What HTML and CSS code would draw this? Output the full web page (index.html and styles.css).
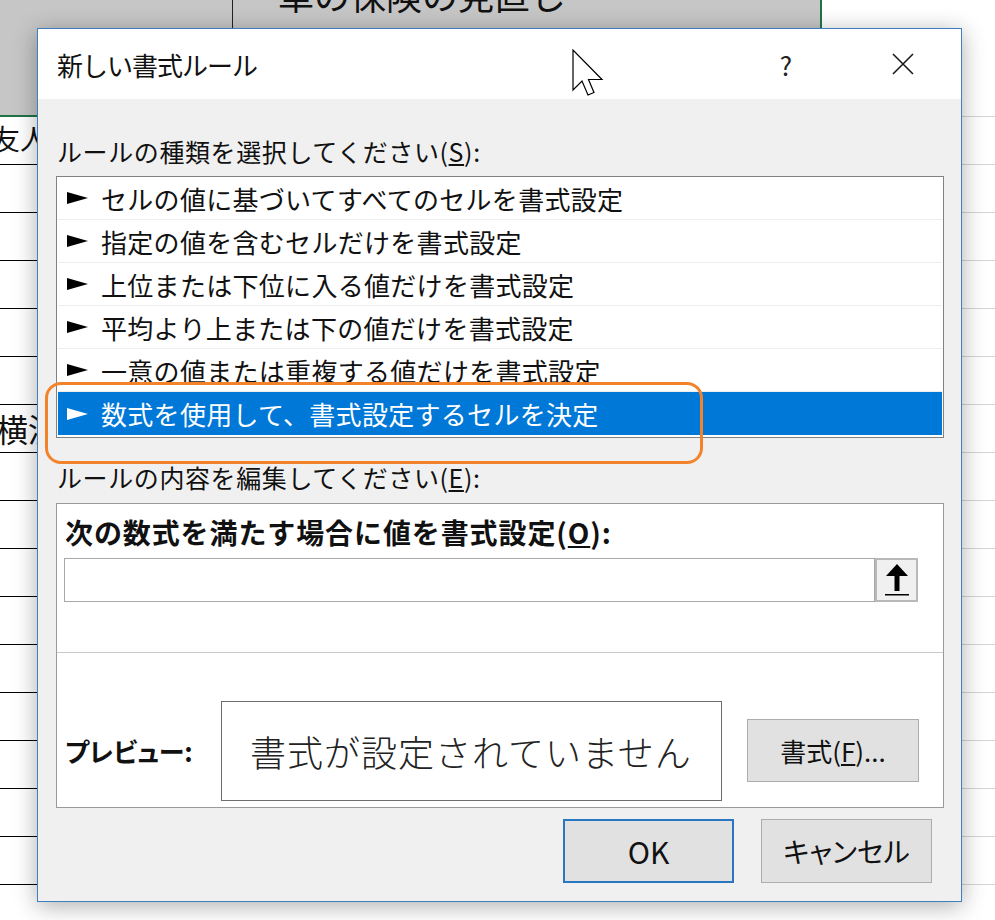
FILE: index.html
```html
<!DOCTYPE html>
<html lang="ja">
<head>
<meta charset="utf-8">
<title>新しい書式ルール</title>
<link rel="stylesheet" href="styles.css">
</head>
<body>
<div class="sheet">
  <div class="hdr">
    <div class="hdr-sel">
      <div class="hdr-a"></div>
      <div class="hdr-b"><span class="sheet-title">車の保険の見直し</span></div>
    </div>
    <div class="hdr-c"></div>
  </div>
  <div class="row"><div class="a"><span class="cell-text t1">友人</span></div><div class="b"></div><div class="c"></div></div>
  <div class="row"><div class="a"></div><div class="b"></div><div class="c"></div></div>
  <div class="row"><div class="a"></div><div class="b"></div><div class="c"></div></div>
  <div class="row"><div class="a"></div><div class="b"></div><div class="c"></div></div>
  <div class="row"><div class="a"></div><div class="b"></div><div class="c"></div></div>
  <div class="row"><div class="a"></div><div class="b"></div><div class="c"></div></div>
  <div class="row"><div class="a"><span class="cell-text t2">横浜</span></div><div class="b"></div><div class="c"></div></div>
  <div class="row"><div class="a"></div><div class="b"></div><div class="c"></div></div>
  <div class="row"><div class="a"></div><div class="b"></div><div class="c"></div></div>
  <div class="row"><div class="a"></div><div class="b"></div><div class="c"></div></div>
  <div class="row"><div class="a"></div><div class="b"></div><div class="c"></div></div>
  <div class="row"><div class="a"></div><div class="b"></div><div class="c"></div></div>
  <div class="row"><div class="a"></div><div class="b"></div><div class="c"></div></div>
  <div class="row"><div class="a"></div><div class="b"></div><div class="c"></div></div>
  <div class="row"><div class="a"></div><div class="b"></div><div class="c"></div></div>
  <div class="row"><div class="a"></div><div class="b"></div><div class="c"></div></div>
</div>

<div class="dialog">
  <div class="titlebar">
    <div class="title">新しい書式ルール</div>
    <div class="help">?</div>
    <div class="close">
      <svg width="22" height="22" viewBox="0 0 22 22"><path d="M1 1 L21 21 M21 1 L1 21" stroke="#1a1a1a" stroke-width="1.6" fill="none"/></svg>
    </div>
  </div>
  <div class="body">
    <div class="label">ルールの種類を選択してください(<u>S</u>):</div>
    <div class="listbox">
      <div class="item"><span class="arrow"><svg width="21" height="12" viewBox="0 0 21 12"><polygon points="0,0 21,6 0,12" fill="currentColor"/></svg></span>セルの値に基づいてすべてのセルを書式設定</div>
      <div class="item"><span class="arrow"><svg width="21" height="12" viewBox="0 0 21 12"><polygon points="0,0 21,6 0,12" fill="currentColor"/></svg></span>指定の値を含むセルだけを書式設定</div>
      <div class="item"><span class="arrow"><svg width="21" height="12" viewBox="0 0 21 12"><polygon points="0,0 21,6 0,12" fill="currentColor"/></svg></span>上位または下位に入る値だけを書式設定</div>
      <div class="item"><span class="arrow"><svg width="21" height="12" viewBox="0 0 21 12"><polygon points="0,0 21,6 0,12" fill="currentColor"/></svg></span>平均より上または下の値だけを書式設定</div>
      <div class="item"><span class="arrow"><svg width="21" height="12" viewBox="0 0 21 12"><polygon points="0,0 21,6 0,12" fill="currentColor"/></svg></span>一意の値または重複する値だけを書式設定</div>
      <div class="item selected"><span class="arrow"><svg width="21" height="12" viewBox="0 0 21 12"><polygon points="0,0 21,6 0,12" fill="currentColor"/></svg></span>数式を使用して、書式設定するセルを決定</div>
    </div>
    <div class="label label2">ルールの内容を編集してください(<u>E</u>):</div>
    <div class="panel">
      <div class="formula">
        <div class="bold-label">次の数式を満たす場合に値を書式設定(<u>O</u>):</div>
        <div class="input-row">
          <div class="input"></div>
          <div class="range-btn">
            <svg width="26" height="34" viewBox="0 0 26 34"><path d="M13 1 L24 13 L15.5 13 L15.5 28 L10.5 28 L10.5 13 L2 13 Z" fill="#000"/><rect x="1" y="31" width="24" height="1.5" fill="#000"/></svg>
          </div>
        </div>
      </div>
      <div class="preview">
        <div class="pv-label">プレビュー:</div>
        <div class="pv-box">書式が設定されていません</div>
        <div class="fmt-btn">書式(<u>F</u>)...</div>
      </div>
    </div>
    <div class="buttons">
      <div class="btn ok">OK</div>
      <div class="btn">キャンセル</div>
    </div>
  </div>
</div>

<div class="annot"></div>

<svg class="cursor" width="34" height="50" viewBox="0 0 34 50">
  <path d="M1 1 L1 41 L10 32 L16 46 L22 43.5 L16.5 30.5 L30 30.5 Z" fill="#fff" stroke="#000" stroke-width="1.2" stroke-linejoin="miter"/>
</svg>
</body>
</html>
```

FILE: styles.css
```css
* { box-sizing: border-box; }

html, body {
  margin: 0;
  padding: 0;
  background: #ffffff;
  width: 995px;
  height: 920px;
  overflow: hidden;
  font-family: "Noto Sans CJK JP", "Noto Sans", sans-serif;
  color: #000;
}

/* ---------- spreadsheet background ---------- */
.sheet {
  width: 995px;
}

.hdr {
  display: grid;
  grid-template-columns: 822px 1fr;
  height: 117px;
}

.hdr-sel {
  display: flex;
  background: #c6c6c6;
  border-right: 2px solid #217346;
  border-bottom: 2px solid #217346;
}

.hdr-a {
  width: 233px;
  border-right: 1px solid #222;
}

.hdr-b {
  flex: 1;
  padding-left: 45px;
  overflow: hidden;
}

.sheet-title {
  display: block;
  font-size: 36px;
  line-height: 40px;
  margin-top: -26px;
  color: #111;
  white-space: nowrap;
}

.hdr-c {
  border-bottom: 1px solid #d4d4d4;
}

.row {
  display: grid;
  grid-template-columns: 233px 589px 1fr;
  height: 48px;
}

.row .a,
.row .b {
  border-bottom: 1px solid #000;
  border-right: 1px solid #000;
  overflow: hidden;
}

.row .c {
  border-bottom: 1px solid #d4d4d4;
}

.cell-text {
  display: block;
  white-space: nowrap;
  color: #111;
}

.t1 {
  font-size: 28px;
  line-height: 42px;
  text-indent: -8px;
}

.t2 {
  font-size: 32px;
  line-height: 46px;
  text-indent: -4px;
}

/* ---------- dialog ---------- */
.dialog {
  position: absolute;
  left: 37px;
  top: 28px;
  width: 925px;
  height: 874px;
  border: 1px solid #3f7fbf;
  background: #f0f0f0;
  box-shadow: 0 4px 22px rgba(0, 0, 0, 0.32);
  display: flex;
  flex-direction: column;
}

.titlebar {
  height: 70px;
  background: #fff;
  display: flex;
  align-items: center;
  padding-left: 19px;
  padding-right: 38px;
  flex-shrink: 0;
}

.title {
  flex: 1;
  font-size: 26px;
  letter-spacing: -1px;
  color: #111;
}

.help {
  width: 40px;
  text-align: center;
  font-size: 26px;
  color: #222;
  margin-right: 77px;
}

.close {
  width: 40px;
  height: 40px;
  display: flex;
  align-items: center;
  justify-content: center;
}

.body {
  flex: 1;
  padding: 0 17px 0 18px;
}

.label {
  margin-top: 35px;
  height: 34px;
  line-height: 34px;
  font-size: 25px;
  letter-spacing: 0.6px;
  padding-left: 1px;
  color: #111;
  white-space: nowrap;
}

.label2 {
  margin-top: 22px;
}

.listbox {
  margin-top: 8px;
  height: 262px;
  border: 1px solid #828282;
  background: #fff;
  padding: 0 1px;
}

.item {
  height: 43px;
  border-bottom: 1px solid #eeeeee;
  display: flex;
  align-items: center;
  padding-left: 9px;
  font-size: 26px;
  letter-spacing: 0.3px;
  color: #111;
  white-space: nowrap;
}

.item .arrow {
  width: 34px;
  display: flex;
  align-items: center;
  color: #000;
}

.item.selected {
  background: #0078d7;
  color: #fff;
  border-bottom: none;
}

.item.selected .arrow {
  color: #fff;
}

.panel {
  margin-top: 9px;
  height: 305px;
  border: 1px solid #9a9a9a;
  background: #fff;
  display: flex;
  flex-direction: column;
}

.formula {
  height: 149px;
  border-bottom: 1px solid #c8c8c8;
  padding: 11px 25px 0 7px;
  flex-shrink: 0;
}

.bold-label {
  height: 34px;
  line-height: 34px;
  font-size: 28px;
  font-weight: 700;
  letter-spacing: 0.9px;
  padding-left: 1px;
  white-space: nowrap;
  color: #111;
}

.input-row {
  margin-top: 9px;
  display: flex;
  height: 44px;
}

.input {
  flex: 1;
  border: 1px solid #a8a8a8;
  background: #fff;
}

.range-btn {
  width: 43px;
  border: 2px solid #b9b9b9;
  background: #f0f0f0;
  display: flex;
  align-items: center;
  justify-content: center;
}

.preview {
  flex: 1;
  display: flex;
  align-items: center;
  padding: 47px 0 6px 8px;
}

.pv-label {
  width: 156px;
  font-size: 26px;
  font-weight: 700;
  font-feature-settings: "palt";
  color: #111;
}

.pv-box {
  width: 501px;
  height: 100px;
  border: 1px solid #6d6d6d;
  display: flex;
  align-items: center;
  padding-left: 28px;
  font-size: 36px;
  font-weight: 300;
  letter-spacing: 1px;
  color: #222;
  white-space: nowrap;
}

.fmt-btn {
  margin-left: 25px;
  width: 172px;
  height: 63px;
  background: #e1e1e1;
  border: 1px solid #adadad;
  display: flex;
  align-items: center;
  justify-content: center;
  font-size: 26px;
  color: #111;
}

.buttons {
  display: flex;
  justify-content: flex-end;
  gap: 27px;
  margin-top: 11px;
  padding-right: 12px;
}

.btn {
  width: 171px;
  height: 64px;
  background: #e1e1e1;
  border: 1px solid #adadad;
  display: flex;
  align-items: center;
  justify-content: center;
  font-size: 28px;
  font-feature-settings: "palt";
  color: #111;
}

.btn.ok {
  border: 2px solid #2a76c0;
  font-size: 30px;
}

/* ---------- overlays ---------- */
.annot {
  position: absolute;
  left: 45px;
  top: 382px;
  width: 658px;
  height: 82px;
  border: 3.5px solid #f3832b;
  border-radius: 16px;
}

.cursor {
  position: absolute;
  left: 572px;
  top: 49px;
}
```
